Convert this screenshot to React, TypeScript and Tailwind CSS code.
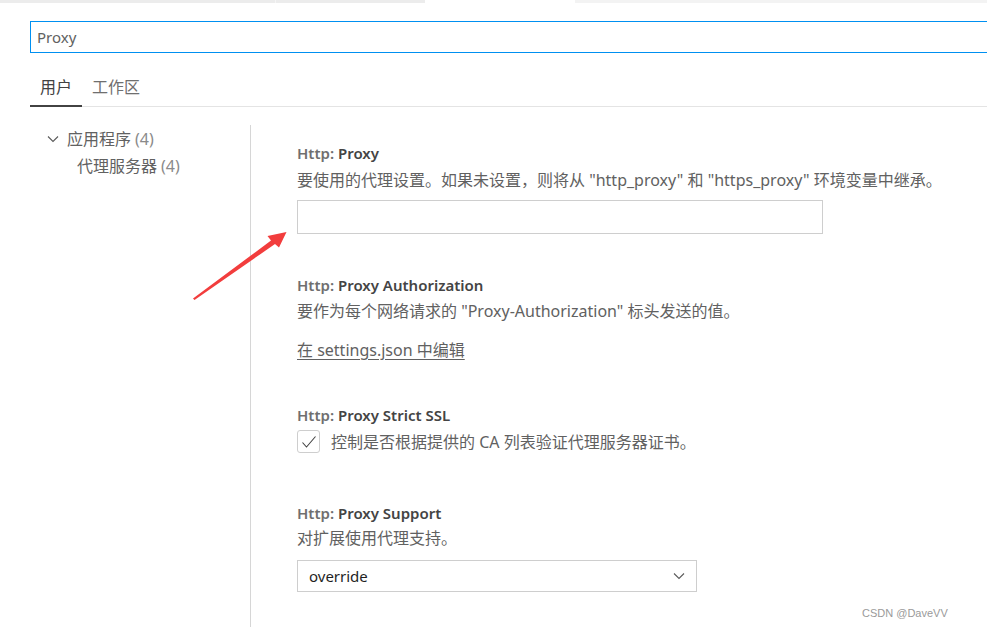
const FONT = { fontFamily: '"Noto Sans", "Noto Sans CJK SC", sans-serif' };

function Chevron({ className }: { className?: string }) {
  return (
    <svg className={className} width="12" height="8" viewBox="0 0 12 8" fill="none">
      <path d="M1 1.5 L6 6.5 L11 1.5" stroke="#5a5a5a" strokeWidth="1.1" />
    </svg>
  );
}

function Title({ name }: { name: string }) {
  return (
    <div className="h-[22px] leading-[22px] text-[15px] font-semibold">
      <span className="text-[#6f6f6f]">Http: </span>
      <span className="text-[#444444]">{name}</span>
    </div>
  );
}

function Desc({ children, className = '' }: { children: React.ReactNode; className?: string }) {
  return <div className={`h-[22px] leading-[22px] text-[16px] text-[#616161] ${className}`}>{children}</div>;
}

export default function App() {
  return (
    <div className="relative w-[987px] h-[627px] overflow-hidden bg-white" style={FONT}>
      {/* editor tab strip remnant */}
      <div className="flex h-[3px]">
        <div className="w-[275px] bg-[#ececec]" />
        <div className="w-px bg-[#f5f5f5]" />
        <div className="w-[149px] bg-[#ececec]" />
        <div className="w-[150px] bg-white" />
        <div className="flex-1 bg-[#f3f3f3]" />
      </div>

      {/* search */}
      <div className="pl-[30px] pt-[18px]">
        <div className="h-[32px] border border-r-0 border-[#0090f1] pl-[6px] leading-[31px] text-[15px] text-[#616161]">
          Proxy
        </div>
      </div>

      {/* tabs */}
      <div className="ml-[30px] mt-[20px] flex h-[34px] items-start border-b border-[#e4e4e4]">
        <div className="relative h-full w-[52px] pl-[10px] leading-[28px] text-[16px] text-[#424242]">
          用户
          <div className="absolute bottom-[-1px] left-0 h-[2px] w-[52px] bg-[#424242]" />
        </div>
        <div className="h-full pl-[10px] leading-[28px] text-[16px] text-[#6f6f6f]">工作区</div>
      </div>

      <div className="flex">
        {/* tree */}
        <div className="w-[250px] pt-[21px]">
          <div className="flex h-[22px] items-center pl-[47px] text-[16px] text-[#616161]">
            <Chevron className="mr-[8px]" />
            <span>应用程序</span>
            <span className="ml-[4px] text-[#8a8a8a]">(4)</span>
          </div>
          <div className="mt-[5px] flex h-[22px] items-center pl-[77px] text-[16px] text-[#616161]">
            <span>代理服务器</span>
            <span className="ml-[4px] text-[#8a8a8a]">(4)</span>
          </div>
        </div>

        <div className="mt-[18px] h-[520px] w-px bg-[#d6d6d6]" />

        {/* settings list */}
        <div className="pl-[46px] pt-[35px]">
          <Title name="Proxy" />
          <Desc className="mt-[5px]">
            要使用的代理设置。如果未设置，则将从 "http_proxy" 和 "https_proxy" 环境变量中继承。
          </Desc>
          <div className="mt-[9px] h-[34px] w-[526px] border border-[#cecece]" />

          <div className="mt-[40px]">
            <Title name="Proxy Authorization" />
            <Desc className="mt-[4px]">要作为每个网络请求的 "Proxy-Authorization" 标头发送的值。</Desc>
            <Desc className="mt-[17px] underline underline-offset-[3px]">在 settings.json 中编辑</Desc>
          </div>

          <div className="mt-[43px]">
            <Title name="Proxy Strict SSL" />
            <div className="mt-[4px] flex items-center">
              <div className="flex h-[23px] w-[23px] items-center justify-center rounded-[3px] border border-[#cecece]">
                <svg width="16" height="14" viewBox="0 0 16 14" fill="none">
                  <path d="M1.5 7.5 L5.5 12 L14.5 1.5" stroke="#424242" strokeWidth="1.1" />
                </svg>
              </div>
              <span className="ml-[11px] text-[16px] leading-[22px] text-[#616161]">
                控制是否根据提供的 CA 列表验证代理服务器证书。
              </span>
            </div>
          </div>

          <div className="mt-[49px]">
            <Title name="Proxy Support" />
            <Desc className="mt-[3px]">对扩展使用代理支持。</Desc>
            <div className="mt-[11px] flex h-[32px] w-[400px] items-center justify-between border border-[#cecece] pl-[11px] pr-[11px]">
              <span className="text-[15px] text-[#1f1f1f]">override</span>
              <Chevron />
            </div>
          </div>
        </div>
      </div>

      {/* annotation arrow */}
      <svg className="absolute left-0 top-0" width="987" height="627" viewBox="0 0 987 627" fill="none">
        <polygon
          points="193,298.5 271,240.5 267.5,236 286.5,232 279,247.5 275,244 194.5,300"
          fill="#f23d3d"
        />
      </svg>

      <div
        className="absolute left-[862px] top-[605px] text-[11px] text-[#9a9a9a]"
        style={{ fontFamily: '"Liberation Sans", Arial, sans-serif' }}
      >
        CSDN @DaveVV
      </div>
    </div>
  );
}
